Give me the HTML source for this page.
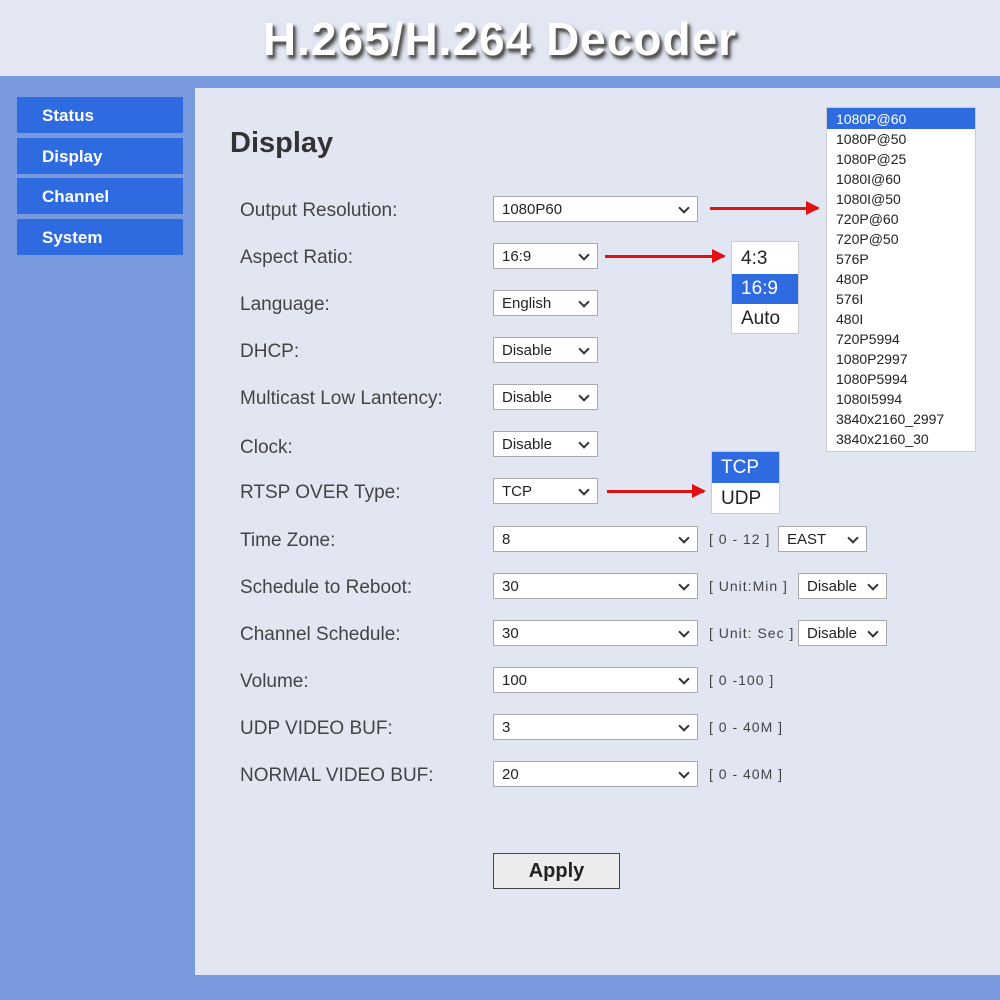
<!DOCTYPE html>
<html><head><meta charset="utf-8"><style>
*{margin:0;padding:0;box-sizing:border-box}
body{width:1000px;height:1000px;background:#7a9ae0;font-family:"Liberation Sans",sans-serif;position:relative;overflow:hidden}
.hdr{position:absolute;left:0;top:0;width:1000px;height:76px;background:#e2e7f3;text-align:center;font-weight:bold;font-size:46px;color:#fff;line-height:78px;text-shadow:2px 3px 2px #555,3px 4px 4px #666;letter-spacing:1px}
.panel{position:absolute;left:195px;top:88px;width:805px;height:887px;background:#e1e6f2}
.nav{position:absolute;left:17px;width:166px;height:36px;background:#2f6be0;color:#fff;font-weight:bold;font-size:17px;line-height:37px;padding-left:25px}
.h{position:absolute;left:230px;top:127px;font-size:29px;font-weight:bold;color:#333}
.lb{position:absolute;left:240px;font-size:19px;color:#444;margin-top:2px}
.sel{position:absolute;left:493px;height:26px;background:#fff;border:1px solid #aaa;font-size:15px;color:#222;line-height:26px;padding-left:8px}
.sel:after{content:"";position:absolute;right:9px;top:7px;width:6px;height:6px;border-right:2px solid #333;border-bottom:2px solid #333;transform:rotate(45deg)}
.w{width:205px}.s{width:105px}
.note{position:absolute;font-size:14px;color:#444;letter-spacing:1px}
.pop{position:absolute;background:#fff;border:1px solid #ccc}
.pop div{padding-left:9px;color:#222}
.hl{background:#2f6be0;color:#fff!important}
.arr{position:absolute;height:3px;background:#e21010}
.arr:after{content:"";position:absolute;right:-2px;top:-6px;border-left:14px solid #e21010;border-top:7px solid transparent;border-bottom:7px solid transparent}
.btn{position:absolute;left:493px;top:853px;width:127px;height:36px;background:#ececec;border:1px solid #444;font-size:20px;font-weight:bold;text-align:center;line-height:34px;color:#222}
</style></head><body>
<div class="hdr">H.265/H.264 Decoder</div>
<div class="panel"></div>
<div class="nav" style="top:97px">Status</div>
<div class="nav" style="top:138px">Display</div>
<div class="nav" style="top:178px">Channel</div>
<div class="nav" style="top:219px">System</div>
<div class="h">Display</div>

<div class="lb" style="top:198px">Output Resolution:</div><div class="sel w" style="top:196px">1080P60</div>
<div class="lb" style="top:245px">Aspect Ratio:</div><div class="sel s" style="top:243px">16:9</div>
<div class="lb" style="top:292px">Language:</div><div class="sel s" style="top:290px">English</div>
<div class="lb" style="top:339px">DHCP:</div><div class="sel s" style="top:337px">Disable</div>
<div class="lb" style="top:386px">Multicast Low Lantency:</div><div class="sel s" style="top:384px">Disable</div>
<div class="lb" style="top:435px">Clock:</div><div class="sel s" style="top:431px">Disable</div>
<div class="lb" style="top:480px">RTSP OVER Type:</div><div class="sel s" style="top:478px">TCP</div>
<div class="lb" style="top:528px">Time Zone:</div><div class="sel w" style="top:526px">8</div>
<div class="lb" style="top:575px">Schedule to Reboot:</div><div class="sel w" style="top:573px">30</div>
<div class="lb" style="top:622px">Channel Schedule:</div><div class="sel w" style="top:620px">30</div>
<div class="lb" style="top:669px">Volume:</div><div class="sel w" style="top:667px">100</div>
<div class="lb" style="top:716px">UDP VIDEO BUF:</div><div class="sel w" style="top:714px">3</div>
<div class="lb" style="top:763px">NORMAL VIDEO BUF:</div><div class="sel w" style="top:761px">20</div>

<div class="note" style="left:709px;top:531px">[ 0 - 12 ]</div>
<div class="sel" style="left:778px;top:526px;width:89px">EAST</div>
<div class="note" style="left:709px;top:578px">[ Unit:Min ]</div>
<div class="sel" style="left:798px;top:573px;width:89px">Disable</div>
<div class="note" style="left:709px;top:625px">[ Unit:&nbsp;Sec ]</div>
<div class="sel" style="left:798px;top:620px;width:89px">Disable</div>
<div class="note" style="left:709px;top:672px">[ 0 -100 ]</div>
<div class="note" style="left:709px;top:719px">[ 0 - 40M ]</div>
<div class="note" style="left:709px;top:766px">[ 0 - 40M ]</div>

<div class="arr" style="left:710px;top:207px;width:108px"></div>
<div class="arr" style="left:605px;top:255px;width:119px"></div>
<div class="arr" style="left:607px;top:490px;width:97px"></div>

<div class="pop" style="left:826px;top:107px;width:150px;height:345px;font-size:14px;line-height:20px">
<div class="hl" style="height:21px;line-height:22px">1080P@60</div><div>1080P@50</div><div>1080P@25</div><div>1080I@60</div><div>1080I@50</div><div>720P@60</div><div>720P@50</div><div>576P</div><div>480P</div><div>576I</div><div>480I</div><div>720P5994</div><div>1080P2997</div><div>1080P5994</div><div>1080I5994</div><div>3840x2160_2997</div><div>3840x2160_30</div>
</div>
<div class="pop" style="left:731px;top:241px;width:68px;height:93px;font-size:19px;line-height:30px;padding-top:2px">
<div>4:3</div><div class="hl">16:9</div><div>Auto</div></div>
<div class="pop" style="left:711px;top:451px;width:69px;height:63px;font-size:19px;line-height:31px">
<div class="hl">TCP</div><div>UDP</div></div>

<div class="btn">Apply</div>
</body></html>
